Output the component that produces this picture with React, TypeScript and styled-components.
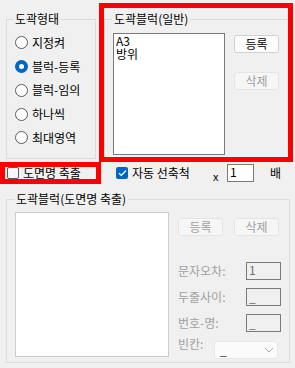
import React from 'react';
import styled, { createGlobalStyle } from 'styled-components';

const Global = createGlobalStyle`
  html, body { margin: 0; padding: 0; background: #f0f0f0; }
  body {
    font-family: "Noto Sans CJK KR", "Noto Sans", sans-serif;
    font-size: 12px;
    color: #000;
  }
  * { box-sizing: border-box; }
`;

const Page = styled.div`
  position: relative;
  width: 295px;
  height: 368px;
  overflow: hidden;
  background: #f0f0f0;
  padding: 11px 0 0 6px;
  display: flex;
  flex-direction: column;
`;

const TopRow = styled.div`
  display: grid;
  grid-template-columns: 90px 186px;
  column-gap: 8px;
`;

const Group = styled.fieldset<{ $h: number; $w?: number }>`
  margin: 0;
  padding: 0;
  min-width: 0;
  height: ${p => p.$h}px;
  ${p => (p.$w ? `width: ${p.$w}px;` : '')}
  border: 1px solid #dcdcdc;
`;

const Legend = styled.legend<{ $indent: number }>`
  margin-left: ${p => p.$indent}px;
  padding: 0 2px;
  height: 16px;
  line-height: 16px;
  font-size: 12px;
  color: #000;
`;

const RadioList = styled.div`
  display: flex;
  flex-direction: column;
  padding: 4px 0 0 8px;
`;

const RadioRow = styled.label`
  display: flex;
  align-items: center;
  gap: 4px;
  height: 23.75px;
  line-height: 16px;
  white-space: nowrap;
`;

const RadioDot = styled.span<{ $checked?: boolean }>`
  width: 13px;
  height: 13px;
  border-radius: 50%;
  flex: none;
  display: flex;
  align-items: center;
  justify-content: center;
  background: ${p => (p.$checked ? '#0067c0' : '#ffffff')};
  border: ${p => (p.$checked ? 'none' : '1px solid #5c5c5c')};
  &::after {
    content: '';
    display: ${p => (p.$checked ? 'block' : 'none')};
    width: 5px;
    height: 5px;
    border-radius: 50%;
    background: #ffffff;
  }
`;

const BlockBody = styled.div`
  display: flex;
  align-items: flex-start;
  padding: 6px 0 0 8px;
`;

const ListBox = styled.div<{ $w: number; $h: number; $disabled?: boolean }>`
  width: ${p => p.$w}px;
  height: ${p => p.$h}px;
  flex: none;
  background: #ffffff;
  border: 1px solid ${p => (p.$disabled ? '#cccccc' : '#7a7a7a')};
  padding: 0 2px;
  display: flex;
  flex-direction: column;
`;

const ListItem = styled.div`
  line-height: 13px;
  height: 13px;
  font-size: 12px;
  overflow: visible;
`;

const ButtonCol = styled.div`
  display: flex;
  flex-direction: column;
  gap: 19px;
  margin: 2px 0 0 9px;
`;

const Btn = styled.button`
  width: 45px;
  height: 18px;
  padding: 0;
  margin: 0;
  font-family: inherit;
  font-size: 12px;
  line-height: 16px;
  color: #000;
  background: #fdfdfd;
  border: 1px solid #d0d0d0;
  border-radius: 3px;
  &:disabled {
    color: #a0a0a0;
    background: #f6f6f6;
    border-color: #e5e5e5;
  }
`;

const OptionRow = styled.div`
  display: flex;
  align-items: center;
  height: 18px;
  margin: 5px 0 9px 1px;
`;

const CheckLabel = styled.label<{ $w: number }>`
  display: flex;
  align-items: center;
  gap: 4px;
  width: ${p => p.$w}px;
  flex: none;
  line-height: 16px;
  white-space: nowrap;
`;

const CheckBox = styled.span<{ $checked?: boolean }>`
  width: 12px;
  height: 12px;
  flex: none;
  border-radius: 2px;
  display: flex;
  align-items: center;
  justify-content: center;
  background: ${p => (p.$checked ? '#0067c0' : '#f7f7f7')};
  border: ${p => (p.$checked ? 'none' : '1px solid #5c5c5c')};
`;

const Times = styled.span`
  width: 14px;
  flex: none;
  font-size: 11px;
  line-height: 12px;
  align-self: flex-end;
`;

const ScaleInput = styled.div`
  width: 27px;
  height: 18px;
  flex: none;
  border: 1px solid #7a7a7a;
  background: #ffffff;
  padding: 0 2px;
  line-height: 14px;
  font-size: 12px;
`;

const Unit = styled.span`
  margin-left: 16px;
  line-height: 16px;
`;

const LowerBody = styled.div`
  display: flex;
  align-items: flex-start;
  padding: 5px 0 0 8px;
`;

const SideCol = styled.div`
  display: flex;
  flex-direction: column;
  margin-left: 9px;
  padding-top: 6px;
`;

const BtnRow = styled.div`
  display: flex;
  gap: 11px;
  margin-bottom: 26px;
`;

const FieldRow = styled.div`
  display: flex;
  align-items: center;
  height: 18px;
  margin-bottom: 8px;
`;

const FieldLabel = styled.span<{ $w: number }>`
  width: ${p => p.$w}px;
  flex: none;
  color: #a0a0a0;
  line-height: 16px;
  white-space: nowrap;
`;

const FieldBox = styled.div<{ $under?: boolean }>`
  width: 35px;
  height: 18px;
  border: 1px solid #7a7a7a;
  background: #f0f0f0;
  color: #6d6d6d;
  padding: 0 2px;
  font-size: 12px;
  line-height: ${p => (p.$under ? '16px' : '14px')};
`;

const SelectRow = styled.div`
  display: flex;
  align-items: flex-start;
  margin-top: -4px;
`;

const SelectBox = styled.div`
  width: 64px;
  height: 18px;
  margin-top: 5px;
  border: 1px solid #e8e8e8;
  border-radius: 3px;
  background: #fbfbfb;
  color: #333;
  display: flex;
  align-items: center;
  justify-content: space-between;
  padding: 0 3px 0 5px;
  line-height: 16px;
`;

const Annot = styled.div<{ $l: number; $t: number; $w: number; $h: number }>`
  position: absolute;
  left: ${p => p.$l}px;
  top: ${p => p.$t}px;
  width: ${p => p.$w}px;
  height: ${p => p.$h}px;
  border: 5px solid #ff0000;
  pointer-events: none;
`;

const shapes = ['지정켜', '블럭-등록', '블럭-임의', '하나씩', '최대영역'];

export default function App() {
  return (
    <>
      <Global />
      <Page>
        <TopRow>
          <Group $h={148}>
            <Legend $indent={6}>도곽형태</Legend>
            <RadioList>
              {shapes.map(s => (
                <RadioRow key={s}>
                  <RadioDot $checked={s === '블럭-등록'} />
                  <span>{s}</span>
                </RadioRow>
              ))}
            </RadioList>
          </Group>
          <Group $h={148}>
            <Legend $indent={7}>도곽블럭(일반)</Legend>
            <BlockBody>
              <ListBox $w={112} $h={122}>
                <ListItem>A3</ListItem>
                <ListItem>방위</ListItem>
              </ListBox>
              <ButtonCol>
                <Btn>등록</Btn>
                <Btn disabled>삭제</Btn>
              </ButtonCol>
            </BlockBody>
          </Group>
        </TopRow>

        <OptionRow>
          <CheckLabel $w={109}>
            <CheckBox />
            <span>도면명 축출</span>
          </CheckLabel>
          <CheckLabel $w={97}>
            <CheckBox $checked>
              <svg width="9" height="8" viewBox="0 0 9 8">
                <polyline points="1,4.2 3.4,6.5 8,1.5" fill="none" stroke="#ffffff" strokeWidth="1.2" />
              </svg>
            </CheckBox>
            <span>자동 선축척</span>
          </CheckLabel>
          <Times>x</Times>
          <ScaleInput>1</ScaleInput>
          <Unit>배</Unit>
        </OptionRow>

        <Group $h={172} $w={284}>
          <Legend $indent={7}>도곽블럭(도면명 축출)</Legend>
          <LowerBody>
            <ListBox $w={154} $h={145} $disabled />
            <SideCol>
              <BtnRow>
                <Btn disabled>등록</Btn>
                <Btn disabled>삭제</Btn>
              </BtnRow>
              <FieldRow>
                <FieldLabel $w={68}>문자오차:</FieldLabel>
                <FieldBox>1</FieldBox>
              </FieldRow>
              <FieldRow>
                <FieldLabel $w={68}>두줄사이:</FieldLabel>
                <FieldBox $under>_</FieldBox>
              </FieldRow>
              <FieldRow>
                <FieldLabel $w={68}>번호-명:</FieldLabel>
                <FieldBox $under>_</FieldBox>
              </FieldRow>
              <SelectRow>
                <FieldLabel $w={36}>빈칸:</FieldLabel>
                <SelectBox>
                  <span>_</span>
                  <svg width="10" height="6" viewBox="0 0 10 6">
                    <polyline points="1,1 5,5 9,1" fill="none" stroke="#a8a8a8" strokeWidth="1" />
                  </svg>
                </SelectBox>
              </SelectRow>
            </SideCol>
          </LowerBody>
        </Group>

        <Annot $l={99} $t={3} $w={194} $h={159} />
        <Annot $l={0} $t={162} $w={101} $h={22} />
      </Page>
    </>
  );
}
